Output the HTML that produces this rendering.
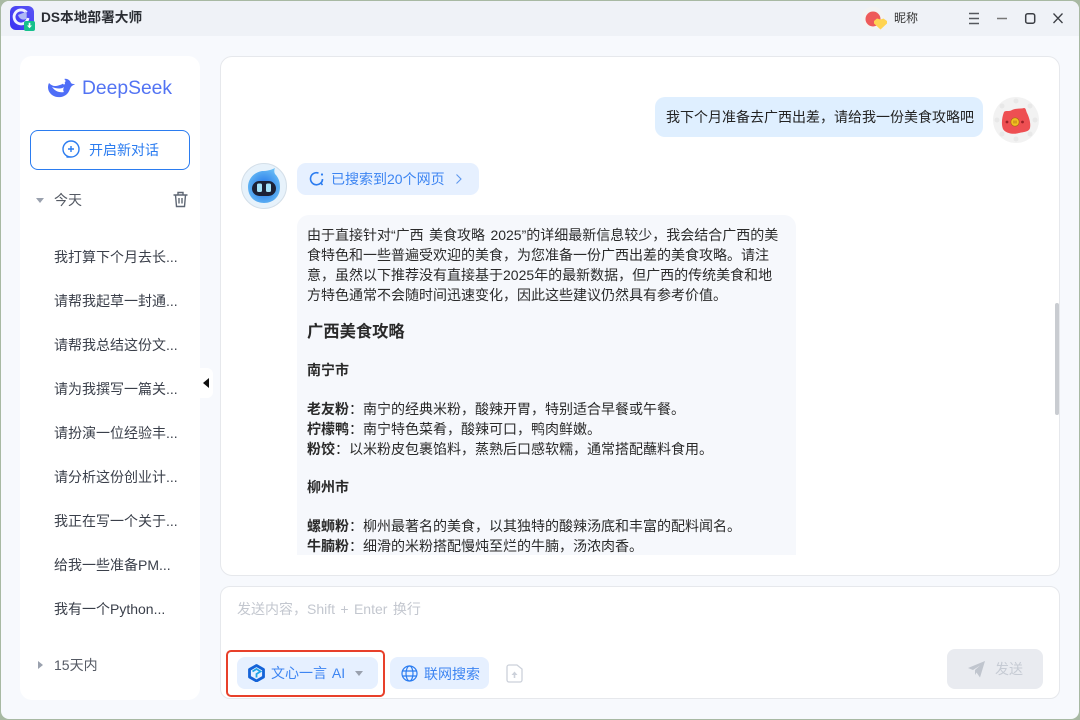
<!DOCTYPE html>
<html lang="zh-CN">
<head>
<meta charset="utf-8">
<style>
*{box-sizing:border-box;margin:0;padding:0}
html,body{width:1080px;height:720px;overflow:hidden;background:#a8b9a3}
body{position:relative;font-family:"Liberation Sans","Noto Sans CJK SC",sans-serif;color:#222}
.abs{position:absolute}
.t{position:absolute;white-space:nowrap;font-size:14px;line-height:20px}
#win{position:absolute;left:1px;top:1px;width:1078px;height:718px;background:#f7f9fd;border-radius:8px;overflow:hidden}
#bar{position:absolute;left:0;top:0;width:1078px;height:35px;background:#eff2f7}
.side{color:#3a3f4a;left:54px}
.msg{left:307px;color:#2a2a2a}
b{font-weight:700}
</style>
</head>
<body>
<div id="win"><div id="bar"></div></div>

<svg class="abs" style="left:10px;top:6px" width="25" height="25" viewBox="0 0 25 25">
<defs><linearGradient id="a" x1="0" y1="1" x2="1" y2="0"><stop offset="0" stop-color="#3a32f2"/><stop offset="1" stop-color="#5a55f5"/></linearGradient></defs>
<rect width="24" height="24" rx="6" fill="url(#a)"/>
<path d="M16.500 6.500A7 7 0 1 0 18 12" fill="none" stroke="#f0f2ff" stroke-width="2.800"/>
<path d="M8 9c1 3 4 6 8 4 1-2 1-5 0-8-1 2-4 2-8 4z" fill="#aeb8f5"/>
<rect x="14" y="15" width="11" height="10" rx="2" fill="#16c08c"/>
<path d="M19.500 16.800v3.500" stroke="#fff" stroke-width="1.600"/><path d="M17 19.500h5l-2.500 2.700z" fill="#fff"/>
</svg>
<div class="t" style="left:41px;top:8px;font-size:13.700px;font-weight:700;color:#2a2d33">DS本地部署大师</div>

<svg class="abs" style="left:862px;top:6px" width="26" height="25" viewBox="0 0 26 25">
<circle cx="11" cy="12" r="11.500" fill="#f3f3f3"/>
<circle cx="11" cy="13" r="7.500" fill="#ee5a5a"/>
<path d="M12 15l3-2.500 3.500 1 3-1 3.500 2.500v2.500l-6.500 6-6.500-6z" fill="#ffd452"/>
</svg>
<div class="t" style="left:894px;top:8px;font-size:12px;color:#333">昵称</div>

<svg class="abs" style="left:960px;top:8px" width="110" height="20" viewBox="0 0 110 20" fill="none" stroke="#3c3f45" stroke-width="1.500">
<path d="M9 5.500h10M9 10.500h10M9 15.500h10" stroke="#55585e"/>
<path d="M37 10.500h10" stroke="#777"/>
<rect x="65.700" y="5.700" width="9" height="9.500" rx="2"/>
<path d="M93.500 5.500l9 9.500M102.500 5.500l-9 9.500" stroke-width="1.300"/>
</svg>

<!-- Sidebar -->
<div class="abs" style="left:20px;top:56px;width:180px;height:644px;background:#fff;border-radius:12px"></div>
<svg class="abs" style="left:47px;top:77px" width="28" height="22" viewBox="0 0 28 22">
<path d="M2 6C0 10 1 15 5 18c4 3 11 3 15-1 3-3 3-7 5-8 1-1 2-1 3-2-2 0-3 0-4-1-1-3-4-5-7-4 2 1 2 3 0 4-3 2-7 3-9 3-2 0-4-1-6-3z" fill="#4f6ef7"/>
<path d="M5 10c3 4 7 6 12 5-1-1-1-3 0-5-2 2-7 2-12 0z" fill="#fff"/>
<circle cx="17" cy="6.500" r="1" fill="#fff"/>
</svg>
<div class="t" style="left:82px;top:76px;font-size:19.300px;line-height:26px;color:#5273f3">DeepSeek</div>

<div class="abs" style="left:30px;top:130px;width:160px;height:40px;border:1px solid #2b7cf0;border-radius:8px"></div>
<svg class="abs" style="left:62px;top:140px" width="19" height="20" viewBox="0 0 19 20" fill="none" stroke="#2b7cf0" stroke-width="1.400">
<path d="M9 17c-4.500 0-8-3.300-8-8a8 8 0 1 1 16 0c0 4.500-3.500 8-8 8H5" stroke-linecap="round"/>
<path d="M9 6v6M6 9h6"/>
</svg>
<div class="t" style="left:89px;top:140px;color:#2b7cf0">开启新对话</div>

<div class="abs" style="left:36px;top:198px;width:0;height:0;border-left:4px solid transparent;border-right:4px solid transparent;border-top:5px solid #9aa1ae"></div>
<div class="t" style="left:54px;top:190px;color:#555a64">今天</div>
<svg class="abs" style="left:172px;top:191px" width="17" height="17" viewBox="0 0 17 17" fill="none" stroke="#5e6673" stroke-width="1.400">
<path d="M1.500 4h14M6 4V1.500h5V4M3.500 4l1 11.500h8l1-11.500M7 7v5.500M10 7v5.500"/>
</svg>

<div class="t side" style="top:247px">我打算下个月去长...</div>
<div class="t side" style="top:291px">请帮我起草一封通...</div>
<div class="t side" style="top:335px">请帮我总结这份文...</div>
<div class="t side" style="top:379px">请为我撰写一篇关...</div>
<div class="t side" style="top:423px">请扮演一位经验丰...</div>
<div class="t side" style="top:467px">请分析这份创业计...</div>
<div class="t side" style="top:511px">我正在写一个关于...</div>
<div class="t side" style="top:555px">给我一些准备PM...</div>
<div class="t side" style="top:599px">我有一个Python...</div>

<div class="abs" style="left:38px;top:661px;width:0;height:0;border-top:4px solid transparent;border-bottom:4px solid transparent;border-left:5px solid #9aa1ae"></div>
<div class="t" style="left:54px;top:655px;color:#555a64">15天内</div>

<div class="abs" style="left:200px;top:368px;width:13px;height:30px;background:#fff;border-radius:0 6px 6px 0"></div>
<div class="abs" style="left:203px;top:378px;width:0;height:0;border-top:5px solid transparent;border-bottom:5px solid transparent;border-right:6px solid #111"></div>

<!-- Chat panel -->
<div class="abs" style="left:220px;top:56px;width:840px;height:520px;background:#fff;border:1px solid #e6e8ec;border-radius:12px"></div>

<div class="abs" style="left:655px;top:97px;width:328px;height:40px;background:#dfefff;border-radius:10px"></div>
<div class="t" style="left:666px;top:107px;color:#222">我下个月准备去广西出差，请给我一份美食攻略吧</div>
<svg class="abs" style="left:993px;top:97px" width="46" height="46" viewBox="0 0 46 46">
<circle cx="23" cy="23" r="23" fill="#f2f2f2"/>
<g fill="#e8e8e8"><circle cx="23" cy="4" r="2.500"/><circle cx="9" cy="9" r="2.500"/><circle cx="37" cy="9" r="2.500"/><circle cx="4" cy="23" r="2.500"/><circle cx="42" cy="23" r="2.500"/><circle cx="9" cy="37" r="2.500"/><circle cx="37" cy="37" r="2.500"/><circle cx="23" cy="42" r="2.500"/></g>
<path d="M11 15C13 13 16 15 19 13 23 11 28 12 31 11 33 11 33 14 34 16 36 20 38 26 37 31 36 35 30 35 26 36 20 38 12 36 10 32 8 27 9 20 11 15Z" fill="#ee4f52"/>
<circle cx="22" cy="25" r="4.200" fill="#f2c11f" stroke="#a8661a" stroke-width=".7"/>
<path d="M21 23.500v3M23 23.500v3" stroke="#a8661a" stroke-width=".8"/>
<circle cx="14" cy="25" r="1.400" fill="#9c2026"/><circle cx="29.500" cy="25" r="1.400" fill="#9c2026"/>
</svg>

<svg class="abs" style="left:241px;top:163px" width="46" height="46" viewBox="0 0 46 46">
<defs><radialGradient id="g" cx=".5" cy=".55" r=".6"><stop offset="0" stop-color="#1d6fe8"/><stop offset="1" stop-color="#6cc0f6"/></radialGradient></defs>
<circle cx="23" cy="23" r="22.500" fill="#e7f2fb" stroke="#d4dfe9"/>
<path d="M7 24c0-9 7-15 14-16 5 0 9-1 13-3-1 2-1 4 0 6 3 3 5 7 5 13 0 10-7 16-16 16S7 34 7 24z" fill="url(#g)"/>
<rect x="11" y="18" width="24" height="15" rx="7.500" fill="#1c2136"/>
<rect x="16" y="20.500" width="5" height="8.500" rx="1.500" fill="#a6e4fb"/><rect x="25" y="20.500" width="5" height="8.500" rx="1.500" fill="#a6e4fb"/>
</svg>

<div class="abs" style="left:297px;top:163px;width:182px;height:32px;background:#e6f0ff;border-radius:9px"></div>
<svg class="abs" style="left:309px;top:171px" width="16" height="16" viewBox="0 0 16 16" fill="none" stroke="#2b7cf0" stroke-width="1.600">
<path d="M9.500 2.100A6 6 0 1 0 13.500 8c0 1.500-.5 3-1.500 4l1.500 2"/><circle cx="13" cy="3.500" r="1.100" fill="#2b7cf0" stroke="none"/>
</svg>
<div class="t" style="left:331px;top:169px;color:#3d85f2">已搜索到20个网页</div>
<svg class="abs" style="left:455px;top:173px" width="8" height="12" viewBox="0 0 8 12" fill="none" stroke="#5e97ee" stroke-width="1.100"><path d="M1.500 1.500l4.500 4.500-4.500 4.500"/></svg>

<div class="abs" style="left:297px;top:215px;width:499px;height:340px;background:#f6f8fc;border-radius:12px 12px 0 0"></div>
<div class="t msg" style="top:225px;word-spacing:1.500px">由于直接针对“广西 美食攻略 2025”的详细最新信息较少，我会结合广西的美</div>
<div class="t msg" style="top:245px">食特色和一些普遍受欢迎的美食，为您准备一份广西出差的美食攻略。请注</div>
<div class="t msg" style="top:265px">意，虽然以下推荐没有直接基于2025年的最新数据，但广西的传统美食和地</div>
<div class="t msg" style="top:285px">方特色通常不会随时间迅速变化，因此这些建议仍然具有参考价值。</div>
<div class="t msg" style="top:322px;font-size:16.300px;font-weight:700">广西美食攻略</div>
<div class="t msg" style="top:360px;font-weight:700">南宁市</div>
<div class="t msg" style="top:399px"><b>老友粉</b>：南宁的经典米粉，酸辣开胃，特别适合早餐或午餐。</div>
<div class="t msg" style="top:419px"><b>柠檬鸭</b>：南宁特色菜肴，酸辣可口，鸭肉鲜嫩。</div>
<div class="t msg" style="top:439px"><b>粉饺</b>：以米粉皮包裹馅料，蒸熟后口感软糯，通常搭配蘸料食用。</div>
<div class="t msg" style="top:477px;font-weight:700">柳州市</div>
<div class="t msg" style="top:516px"><b>螺蛳粉</b>：柳州最著名的美食，以其独特的酸辣汤底和丰富的配料闻名。</div>
<div class="t msg" style="top:536px"><b>牛腩粉</b>：细滑的米粉搭配慢炖至烂的牛腩，汤浓肉香。</div>

<div class="abs" style="left:1055px;top:303px;width:4px;height:112px;background:#c9ccd1;border-radius:2px"></div>

<!-- Input panel -->
<div class="abs" style="left:220px;top:586px;width:840px;height:113px;background:#fff;border:1px solid #e6e8ec;border-radius:10px"></div>
<div class="t" style="left:237px;top:599px;color:#c3c7cf;word-spacing:1.500px">发送内容，Shift + Enter 换行</div>

<div class="abs" style="left:237px;top:657px;width:141px;height:32px;background:#e6f0ff;border-radius:8px"></div>
<div class="abs" style="left:226px;top:650px;width:159px;height:47px;border:2px solid #e8402a;border-radius:5px"></div>
<svg class="abs" style="left:247px;top:664px" width="19" height="18" viewBox="0 0 19 18" fill="none">
<path d="M9.500 1.500l7 4v7.500l-7 4-7-4V5.500z" stroke="#1463d8" stroke-width="2.800" stroke-linejoin="round"/>
<path d="M5.500 7.500l4-2.500 4 2.500-4 2.500v3.500" stroke="#1fa5e8" stroke-width="1.800"/>
</svg>
<div class="t" style="left:271px;top:663px;color:#3d85f2;word-spacing:1px">文心一言 AI</div>
<div class="abs" style="left:355px;top:671px;width:0;height:0;border-left:4px solid transparent;border-right:4px solid transparent;border-top:5px solid #9aa1ae"></div>

<div class="abs" style="left:390px;top:657px;width:99px;height:32px;background:#e6f0ff;border-radius:8px"></div>
<svg class="abs" style="left:401px;top:665px" width="17" height="17" viewBox="0 0 17 17" fill="none" stroke="#2b7cf0" stroke-width="1.200">
<circle cx="8.500" cy="8.500" r="7.500"/><ellipse cx="8.500" cy="8.500" rx="3.500" ry="7.500"/><path d="M1 6h15M1 11h15"/>
</svg>
<div class="t" style="left:424px;top:664px;color:#3d85f2">联网搜索</div>

<svg class="abs" style="left:506px;top:664px" width="18" height="19" viewBox="0 0 18 19" fill="none" stroke="#ccd1da" stroke-width="1.300">
<path d="M3 1h8l5 4v11a2 2 0 0 1-2 2H3a2 2 0 0 1-2-2V3a2 2 0 0 1 2-2z"/><path d="M8.500 14V8.500" stroke-width="1.600"/><path d="M5.500 11l3-3.500 3 3.500z" fill="#ccd1da" stroke="none"/>
</svg>

<div class="abs" style="left:947px;top:649px;width:96px;height:40px;background:#e9ebf0;border-radius:8px"></div>
<svg class="abs" style="left:968px;top:661px" width="18" height="17" viewBox="0 0 18 17"><path d="M0 7L17 0l-5 16.500-3.500-5L7 14V9l5-4.500L5 9z" fill="#c0c5ce"/></svg>
<div class="t" style="left:995px;top:659px;color:#c6cbd4">发送</div>
</body>
</html>
